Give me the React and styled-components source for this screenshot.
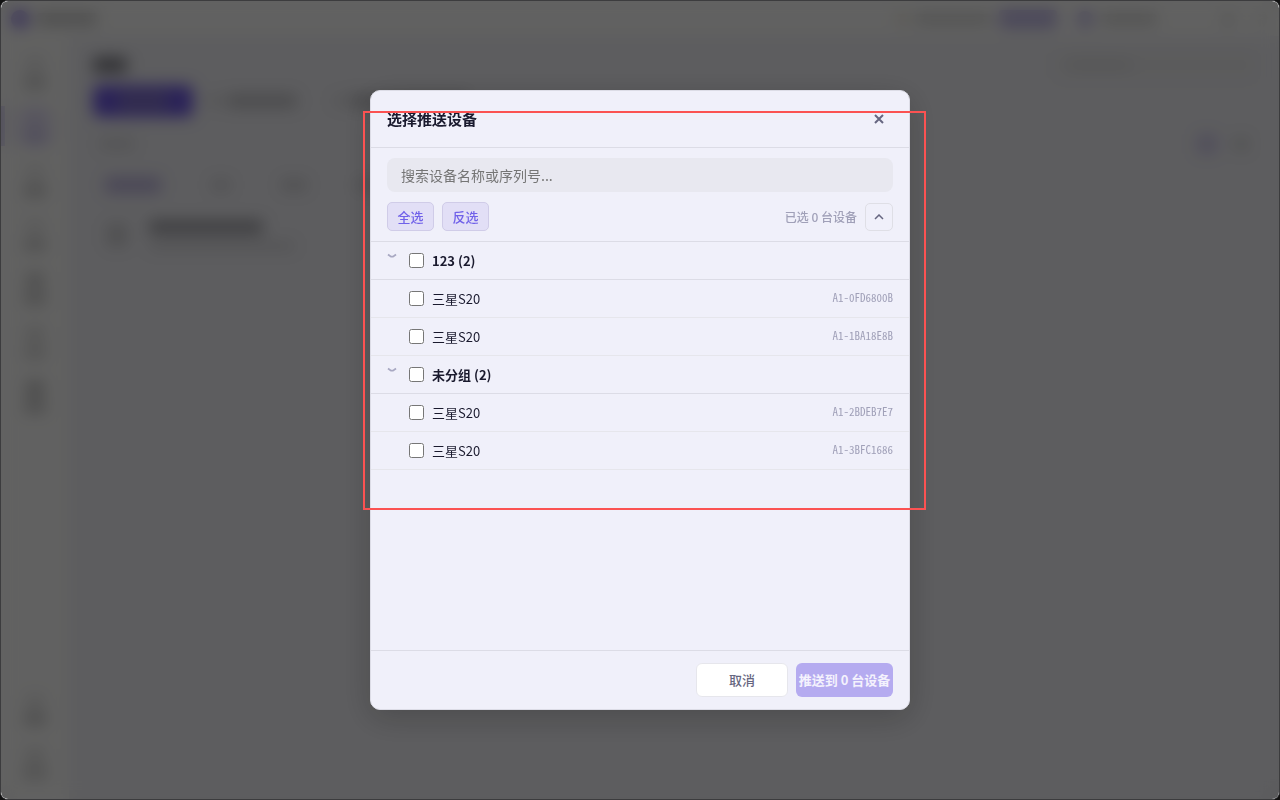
import React from 'react';
import styled, { createGlobalStyle } from 'styled-components';

const GlobalStyle = createGlobalStyle`
  * {
    box-sizing: border-box;
  }

  body {
    margin: 0;
    background: #111;
    color: #1a1a2e;
    font-family: 'Noto Sans CJK SC', sans-serif;
    font-size: 13px;
    line-height: 20px;
  }

  button,
  input {
    font-family: inherit;
  }
`;

const Window = styled.div`
  position: relative;
  height: 100vh;
  border: 1px solid #3c3c3e;
  border-radius: 8px;
  overflow: hidden;
  background: #e8e8ed;
`;

const Shell = styled.div`
  height: 100%;
  display: flex;
  flex-direction: column;
`;

const TopBar = styled.header`
  height: 35px;
  flex: none;
  display: flex;
  align-items: center;
  gap: 8px;
  padding: 0 12px 0 10px;
  background: #f3f3f2;
`;

const Push = styled.div`
  flex: 1;
`;

const Block = styled.div`
  width: ${(p) => p.$w}px;
  height: ${(p) => p.$h}px;
  flex: none;
  border-radius: ${(p) => p.$r || 3}px;
  background: ${(p) => p.$c || '#c8c8ca'};
`;

const Columns = styled.div`
  flex: 1;
  display: flex;
  min-height: 0;
`;

const Side = styled.nav`
  width: 68px;
  flex: none;
  display: flex;
  flex-direction: column;
  gap: 14px;
  padding: 16px 0;
  background: #f3f3f2;
`;

const SideItem = styled.div`
  height: 40px;
  flex: none;
  display: flex;
  align-items: center;
  justify-content: center;
  border-left: 4px solid ${(p) => (p.$active ? '#c8c2ea' : 'transparent')};
  padding-right: 4px;
`;

const SideBox = styled.div`
  width: 40px;
  height: 40px;
  display: flex;
  flex-direction: column;
  align-items: center;
  justify-content: center;
  gap: 3px;
  border-radius: 8px;
  background: ${(p) => (p.$active ? '#e6e3f0' : 'transparent')};
`;

const Main = styled.main`
  flex: 1;
  display: flex;
  flex-direction: column;
  padding: 15px 24px;
`;

const Line = styled.div`
  display: flex;
  align-items: center;
  gap: ${(p) => p.$gap || 16}px;
`;

const MainLine = styled(Line)`
  height: ${(p) => p.$h}px;
  padding: 0 ${(p) => p.$inset || 0}px;
`;

const Tab = styled.div`
  width: 100px;
  height: 32px;
  display: flex;
  align-items: center;
  justify-content: center;
  margin-right: 8px;
  border-radius: 6px;
  background: #6a55dc;
`;

const SearchGhost = styled.div`
  width: 200px;
  height: 28px;
  display: flex;
  align-items: center;
  padding: 0 12px;
  border-radius: 6px;
  background: #e4e4e6;
`;

const Stack = styled.div`
  display: flex;
  flex-direction: column;
  gap: 8px;
`;

const Overlay = styled.div`
  position: absolute;
  inset: 0;
  display: flex;
  align-items: center;
  justify-content: center;
  background: rgba(0, 0, 0, 0.6);
  backdrop-filter: blur(8px);
`;

const DialogWrap = styled.div`
  position: relative;
  width: 540px;
  max-width: 90%;
`;

const Dialog = styled.section`
  height: 620px;
  max-height: 90vh;
  display: flex;
  flex-direction: column;
  overflow: hidden;
  border: 1px solid #dcdce6;
  border-radius: 10px;
  background: #f0f0fa;
  box-shadow: 0 8px 32px rgba(0, 0, 0, 0.2);
`;

const Highlight = styled.div`
  position: absolute;
  top: 21px;
  left: -7px;
  right: -16px;
  height: 399px;
  border: 2px solid #fb5252;
  pointer-events: none;
`;

const DialogHead = styled.header`
  height: 57px;
  flex: none;
  display: flex;
  align-items: center;
  justify-content: space-between;
  padding: 0 16px;
  border-bottom: 1px solid #dcdce6;
`;

const Title = styled.h2`
  margin: 0;
  font-size: 15px;
  font-weight: 700;
`;

const CloseButton = styled.button`
  width: 28px;
  height: 28px;
  display: flex;
  align-items: center;
  justify-content: center;
  padding: 0;
  border: 0;
  background: none;
  color: #666680;
`;

const Tools = styled.div`
  display: flex;
  flex-direction: column;
  gap: 10px;
  padding: 10px 16px;
  border-bottom: 1px solid #dcdce6;
`;

const Search = styled.input`
  width: 100%;
  height: 34px;
  padding: 0 14px;
  border: 0;
  border-radius: 8px;
  background: #e8e8f0;
  font-size: 14px;

  &::placeholder {
    color: #757575;
  }
`;

const PickButton = styled.button`
  height: 29px;
  min-width: 47px;
  padding: 0 9px;
  border: 1px solid #d0cce8;
  border-radius: 5px;
  background: #e2dff6;
  color: #7061e9;
  font-size: 13px;
  font-weight: 500;
`;

const Count = styled.span`
  margin-left: auto;
  color: #a0a0b8;
  font-size: 12px;
  font-weight: 500;
`;

const FoldButton = styled.button`
  width: 28px;
  height: 28px;
  display: flex;
  align-items: center;
  justify-content: center;
  padding: 0;
  border: 1px solid #dfdfe6;
  border-radius: 5px;
  background: #f0f0fa;
  color: #666680;
`;

const List = styled.div`
  flex: 1;
  overflow: auto;
`;

const Row = styled.div`
  height: 38px;
  display: flex;
  align-items: center;
  gap: 8px;
  padding: 0 16px;
  border-bottom: 1px solid ${(p) => (p.$group ? '#dcdce6' : '#e6e6ec')};
  font-weight: ${(p) => (p.$group ? 700 : 400)};
`;

const Caret = styled.span`
  width: 14px;
  height: 16px;
  display: flex;
  align-items: flex-start;
  color: #a8a8c2;
`;

const CheckLabel = styled.label`
  flex: 1;
  display: flex;
  align-items: center;
  gap: 8px;
`;

const Check = styled.input`
  width: 15px;
  height: 15px;
  margin: 0;
`;

const Serial = styled.span`
  padding-bottom: 4px;
  color: #a0a0b8;
  font-family: 'Noto Sans Mono CJK SC', 'Liberation Mono', monospace;
  font-size: 11px;
`;

const DialogFoot = styled.footer`
  display: flex;
  justify-content: flex-end;
  gap: 8px;
  padding: 12px 16px;
  border-top: 1px solid #dcdce6;
`;

const FootButton = styled.button`
  height: 34px;
  min-width: ${(p) => (p.$primary ? 97 : 92)}px;
  padding: 0 1px 1px;
  border: ${(p) => (p.$primary ? '0' : '1px solid #e6e6ec')};
  border-radius: 6px;
  background: ${(p) => (p.$primary ? '#b5abf0' : '#fff')};
  color: ${(p) => (p.$primary ? '#f4f2fd' : '#666680')};
  font-size: 13px;
  font-weight: ${(p) => (p.$primary ? 700 : 500)};
`;

const groups = [
  {
    name: '123',
    devices: [
      { name: '三星S20', serial: 'A1-0FD6800B' },
      { name: '三星S20', serial: 'A1-1BA18E8B' },
    ],
  },
  {
    name: '未分组',
    devices: [
      { name: '三星S20', serial: 'A1-2BDEB7E7' },
      { name: '三星S20', serial: 'A1-3BFC1686' },
    ],
  },
];

// icon / label tone of each entry in the side bar
const sideItems = [
  ['#e0e0e0', '#c6c6c6'],
  ['#d6d0ec', '#c4bce6'],
  ['#e2e2e2', '#c2c2c2'],
  ['#e2e2e2', '#c6c6c6'],
  ['#c8c8c8', '#c4c4c4'],
  ['#d8d8d8', '#d0d0d0'],
  ['#c0c0c0', '#c0c0c0'],
];

const CloseIcon = () => (
  <svg width="10" height="10" viewBox="0 0 10 10" fill="none" stroke="currentColor" strokeWidth="2">
    <path d="M1 1l8 8M9 1L1 9" />
  </svg>
);

const UpIcon = () => (
  <svg width="10" height="6" viewBox="0 0 10 6" fill="none" stroke="currentColor" strokeWidth="1.5">
    <path d="M1 5l4-4 4 4" />
  </svg>
);

const DownIcon = () => (
  <svg width="10" height="6" viewBox="0 0 10 6" fill="none" stroke="currentColor" strokeWidth="1.8">
    <path d="M1 1.500l3 2.200h2l3-2.200" />
  </svg>
);

function Backdrop() {
  return (
    <Shell aria-hidden="true">
      <TopBar>
        <Block $w={18} $h={18} $r={9} $c="#8a78dc" />
        <Block $w={60} $h={12} $c="#c0c0c0" />
        <Push />
        <Block $w={10} $h={10} $c="#dcd4c4" />
        <Block $w={76} $h={10} $c="#cacaca" />
        <Block $w={58} $h={18} $c="#b8b0e0" />
        <Block $w={4} $h={4} $c="#f3f3f2" />
        <Block $w={16} $h={16} $r={8} $c="#b4ace0" />
        <Block $w={56} $h={10} $c="#c8c8c8" />
        <Line $gap={24}>
          <Block $w={34} $h={4} $c="#f3f3f2" />
          <Block $w={10} $h={10} $c="#cacaca" />
          <Block $w={10} $h={10} $c="#dcdcdc" />
        </Line>
      </TopBar>
      <Columns>
        <Side>
          {sideItems.map(([icon, label], i) => (
            <SideItem key={i} $active={i === 1}>
              <SideBox $active={i === 1}>
                <Block $w={18} $h={18} $c={icon} />
                <Block $w={22} $h={12} $c={label} />
              </SideBox>
            </SideItem>
          ))}
          <Push />
          <SideItem>
            <SideBox>
              <Block $w={18} $h={16} $c="#dedede" />
              <Block $w={22} $h={12} $c="#c0c0c0" />
            </SideBox>
          </SideItem>
          <SideItem>
            <SideBox>
              <Block $w={18} $h={16} $c="#d8d8d8" />
              <Block $w={24} $h={12} $c="#cacaca" />
            </SideBox>
          </SideItem>
        </Side>
        <Main>
          <MainLine $h={28}>
            <Block $w={34} $h={16} $c="#7c7c84" />
            <Push />
            <SearchGhost>
              <Block $w={64} $h={8} $c="#d4d4d6" />
            </SearchGhost>
          </MainLine>
          <MainLine $h={44} $gap={6}>
            <Tab>
              <Block $w={50} $h={20} $c="#7e70c4" />
            </Tab>
            <Block $w={14} $h={12} $c="#d2d2d4" />
            <Block $w={70} $h={14} $c="#bcbcc0" />
            <Block $w={24} $h={12} $c="#e8e8ed" />
            <Block $w={10} $h={12} $c="#d2d2d4" />
            <Block $w={120} $h={14} $c="#bcbcc0" />
          </MainLine>
          <MainLine $h={42} $inset={6}>
            <Block $w={36} $h={12} $c="#d2d2d5" />
            <Push />
            <Block $w={20} $h={20} $c="#cac4e4" />
            <Block $w={16} $h={14} $c="#cecfd0" />
          </MainLine>
          <MainLine $h={40} $gap={50} $inset={12}>
            <Block $w={56} $h={16} $c="#b8b0d8" />
            <Block $w={20} $h={12} $c="#ccccd0" />
            <Block $w={26} $h={12} $c="#c8c8cc" />
            <Block $w={26} $h={12} $c="#c8c8cc" />
          </MainLine>
          <MainLine $h={60} $gap={22} $inset={14}>
            <Block $w={20} $h={24} $c="#c8c8cb" />
            <Stack>
              <Block $w={114} $h={14} $c="#9c9ca2" />
              <Block $w={146} $h={8} $c="#ccccd0" />
            </Stack>
          </MainLine>
        </Main>
      </Columns>
    </Shell>
  );
}

export default function App() {
  return (
    <Window>
      <GlobalStyle />
      <Backdrop />
      <Overlay>
        <DialogWrap>
          <Dialog role="dialog" aria-labelledby="dialog-title">
            <DialogHead>
              <Title id="dialog-title">选择推送设备</Title>
              <CloseButton aria-label="关闭">
                <CloseIcon />
              </CloseButton>
            </DialogHead>
            <Tools>
              <Search aria-label="搜索设备" placeholder="搜索设备名称或序列号..." />
              <Line $gap={8}>
                <PickButton>全选</PickButton>
                <PickButton>反选</PickButton>
                <Count>已选 0 台设备</Count>
                <FoldButton aria-label="收起">
                  <UpIcon />
                </FoldButton>
              </Line>
            </Tools>
            <List>
              {groups.map((group) => (
                <React.Fragment key={group.name}>
                  <Row $group>
                    <Caret>
                      <DownIcon />
                    </Caret>
                    <CheckLabel>
                      <Check type="checkbox" />
                      {group.name} ({group.devices.length})
                    </CheckLabel>
                  </Row>
                  {group.devices.map((device) => (
                    <Row key={device.serial}>
                      <Caret />
                      <CheckLabel>
                        <Check type="checkbox" />
                        {device.name}
                      </CheckLabel>
                      <Serial>{device.serial}</Serial>
                    </Row>
                  ))}
                </React.Fragment>
              ))}
            </List>
            <DialogFoot>
              <FootButton>取消</FootButton>
              <FootButton $primary>推送到 0 台设备</FootButton>
            </DialogFoot>
          </Dialog>
          <Highlight />
        </DialogWrap>
      </Overlay>
    </Window>
  );
}
